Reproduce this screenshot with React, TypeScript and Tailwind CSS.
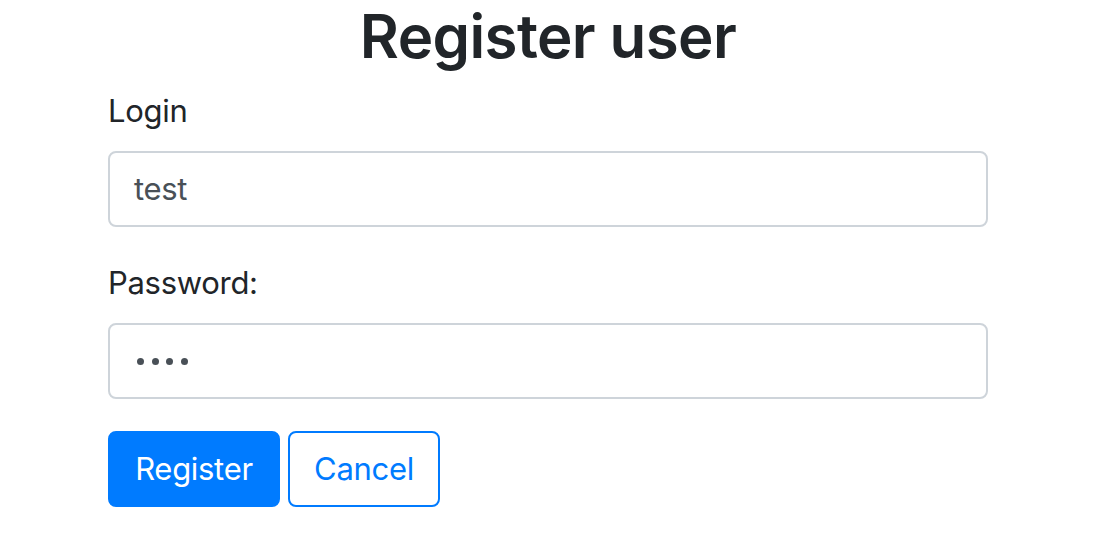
export default function App() {
  return (
    <div className="min-h-[542px] w-[1116px] bg-white text-[#212529]" style={{ fontFamily: 'Inter, "Noto Sans", sans-serif' }}>
      <div className="ml-[108px] w-[880px]">
        <h2 className="mb-[15px] text-center text-[60px] font-semibold leading-[72px] tracking-[-0.6px]">Register user</h2>
        <div className="mb-[32px]">
          <label className="mb-[16px] block text-[31px] leading-[48px] tracking-[-0.3px]">Login</label>
          <div className="flex h-[76px] items-center rounded-[8px] border-2 border-[#ced4da] px-[24px] text-[31px] tracking-[-0.3px] text-[#495057]">test</div>
        </div>
        <div className="mb-[32px]">
          <label className="mb-[16px] block text-[31px] leading-[48px] tracking-[-0.3px]">Password:</label>
          <div className="flex h-[76px] items-center gap-[7.5px] rounded-[8px] border-2 border-[#ced4da] px-[27px] text-[#495057]">
            <span className="h-[7px] w-[7px] rounded-full bg-[#495057]" />
            <span className="h-[7px] w-[7px] rounded-full bg-[#495057]" />
            <span className="h-[7px] w-[7px] rounded-full bg-[#495057]" />
            <span className="h-[7px] w-[7px] rounded-full bg-[#495057]" />
          </div>
        </div>
        <div className="flex gap-[8px]">
          <button className="flex h-[76px] w-[172px] items-center justify-center rounded-[8px] border-2 border-[#007bff] bg-[#007bff] text-[31px] tracking-[-0.3px] text-white">Register</button>
          <button className="flex h-[76px] w-[152px] items-center justify-center rounded-[8px] border-2 border-[#007bff] bg-white text-[31px] tracking-[-0.3px] text-[#007bff]">Cancel</button>
        </div>
      </div>
    </div>
  );
}
